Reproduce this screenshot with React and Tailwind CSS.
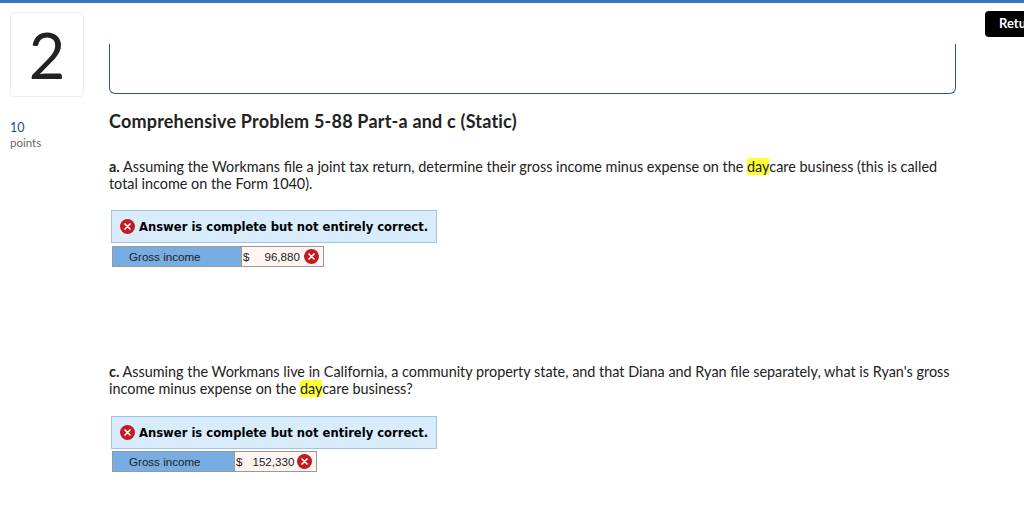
import React from 'react'

function XIcon() {
  return (
    <svg width="15" height="15" viewBox="0 0 15 15" className="shrink-0">
      <circle cx="7.5" cy="7.5" r="7.5" fill="#c21a1f" />
      <path d="M5 5l5 5M10 5l-5 5" stroke="#fff" strokeWidth="1.7" strokeLinecap="round" />
    </svg>
  )
}

function Answer({ labelWidth, valueWidth, amount, gap, top, rowTop }) {
  return (
    <div className={top}>
      <div className="ml-[2px] w-[326px] h-[33px] bg-[#d9ecfb] border border-[#9cc4e8] flex items-center pl-[8px] gap-[4px]">
        <XIcon />
        <span className="pt-[2px] font-['DejaVu_Sans'] font-bold text-[11.58px] text-black whitespace-nowrap">Answer is complete but not entirely correct.</span>
      </div>
      <div className={`ml-[3px] ${rowTop} w-fit flex h-[21px] font-['Liberation_Sans'] text-[11.6px] text-[#222] border-b border-[#999]`}>
        <div className={`${labelWidth} bg-[#78ade3] border-t border-l border-[#999] pl-[16px] flex items-center`}>Gross income</div>
        <div className={`${valueWidth} bg-[#fff6f4] border-t border-l border-r border-[#999] flex items-center pl-[1px]`}>
          <span>$</span>
          <span className={gap}>{amount}</span>
          <XIcon />
        </div>
      </div>
    </div>
  )
}

export default function App() {
  return (
    <div className="relative w-[1024px] h-[514px] overflow-hidden bg-white font-['Lato',sans-serif] text-[#222]">
      <div className="h-[3px] bg-[#3677bb]" />
      <button className="absolute left-[985px] top-[11px] w-[60px] h-[26px] bg-black rounded-[4px] text-white text-[13px] font-bold text-left pl-[14px]">Return</button>

      <div className="flex">
        <div className="w-[109px] shrink-0 pl-[10px] pt-[9px]">
          <div className="w-[74px] h-[85px] border border-[#eeeeee] rounded-[4px] flex items-center justify-center text-[63px] font-normal leading-none text-[#222]">2</div>
          <div className="mt-[23px] text-[12.5px] leading-[15px] text-[#1b4e8d]">10</div>
          <div className="text-[11.5px] leading-[16px] text-[#666]">points</div>
        </div>

        <div className="w-[847px]">
          <div className="h-[50px] mt-[41px] border-l border-r border-b border-[#2a5a94] rounded-b-[6px]" />
          <h2 className="mt-[16px] text-[18px] leading-[22px] font-bold tracking-[0.2px] text-[#222]">Comprehensive Problem 5-88 Part-a and c (Static)</h2>

          <p className="mt-[26px] text-[14.4px] leading-[17px]">
            <b>a.</b> Assuming the Workmans file a joint tax return, determine their gross income minus expense on the <span className="bg-[#ffff33]">day</span>care business (this is called total income on the Form 1040).
          </p>
          <Answer top="mt-[18px]" rowTop="mt-[3px]" labelWidth="w-[129px]" valueWidth="w-[83px]" amount="96,880" gap="ml-[15px] mr-[4px]" />

          <p className="mt-[96px] text-[14.4px] leading-[17px]">
            <b>c.</b> Assuming the Workmans live in California, a community property state, and that Diana and Ryan file separately, what is Ryan's gross income minus expense on the <span className="bg-[#ffff33]">day</span>care business?
          </p>
          <Answer top="mt-[19px]" rowTop="mt-[2px]" labelWidth="w-[122px]" valueWidth="w-[83px]" amount="152,330" gap="ml-[10px] mr-[3px]" />
        </div>
      </div>
    </div>
  )
}
